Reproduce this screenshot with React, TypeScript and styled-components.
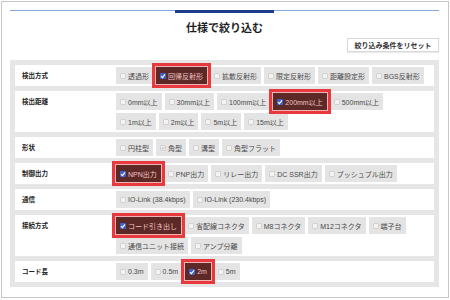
import styled, { createGlobalStyle } from 'styled-components';

type Option = { text: string; checked?: boolean; muted?: boolean };
type FilterRow = { label: string; lines: Option[][] };

const filters: FilterRow[] = [
  {
    label: '検出方式',
    lines: [
      [
        { text: '透過形' },
        { text: '回帰反射形', checked: true },
        { text: '拡散反射形' },
        { text: '限定反射形' },
        { text: '距離設定形' },
        { text: 'BGS反射形' },
      ],
    ],
  },
  {
    label: '検出距離',
    lines: [
      [
        { text: '0mm以上' },
        { text: '30mm以上' },
        { text: '100mm以上' },
        { text: '200mm以上', checked: true },
        { text: '500mm以上' },
      ],
      [{ text: '1m以上' }, { text: '2m以上' }, { text: '5m以上' }, { text: '15m以上' }],
    ],
  },
  {
    label: '形状',
    lines: [
      [
        { text: '円柱型' },
        { text: '角型', muted: true },
        { text: '溝型' },
        { text: '角型フラット' },
      ],
    ],
  },
  {
    label: '制御出力',
    lines: [
      [
        { text: 'NPN出力', checked: true },
        { text: 'PNP出力' },
        { text: 'リレー出力' },
        { text: 'DC SSR出力' },
        { text: 'プッシュプル出力' },
      ],
    ],
  },
  {
    label: '通信',
    lines: [[{ text: 'IO-Link (38.4kbps)' }, { text: 'IO-Link (230.4kbps)' }]],
  },
  {
    label: '接続方式',
    lines: [
      [
        { text: 'コード引き出し', checked: true },
        { text: '省配線コネクタ' },
        { text: 'M8コネクタ' },
        { text: 'M12コネクタ' },
        { text: '端子台' },
      ],
      [{ text: '通信ユニット接続' }, { text: 'アンプ分離' }],
    ],
  },
  {
    label: 'コード長',
    lines: [
      [
        { text: '0.3m' },
        { text: '0.5m' },
        { text: '2m', checked: true },
        { text: '5m' },
      ],
    ],
  },
];

const CheckBox = ({ checked, muted }: { checked?: boolean; muted?: boolean }) => (
  <S.Box $checked={checked} $muted={muted}>
    {(checked || muted) && (
      <svg width="6" height="6" viewBox="0 0 6 6">
        <polyline
          points="1,3.2 2.4,4.6 5,1.4"
          fill="none"
          stroke={checked ? '#fff' : '#a8a8a8'}
          strokeWidth="1.1"
        />
      </svg>
    )}
  </S.Box>
);

const App = () => {
  return (
    <>
      <GlobalStyle />
      <S.Frame>
        <S.TabLine>
          <S.TabMark />
        </S.TabLine>
        <S.Title>仕様で絞り込む</S.Title>
        <S.Toolbar>
          <S.ResetButton>絞り込み条件をリセット</S.ResetButton>
        </S.Toolbar>
        <S.Panel>
          {filters.map((row) => (
            <S.Row key={row.label}>
              <S.Label>{row.label}</S.Label>
              <S.Options>
                {row.lines.map((line, i) => (
                  <S.Line key={i}>
                    {line.map((opt) => (
                      <S.Chip key={opt.text} $active={opt.checked}>
                        <CheckBox checked={opt.checked} muted={opt.muted} />
                        {opt.text}
                      </S.Chip>
                    ))}
                  </S.Line>
                ))}
              </S.Options>
            </S.Row>
          ))}
        </S.Panel>
      </S.Frame>
    </>
  );
};

const GlobalStyle = createGlobalStyle`
  html, body {
    margin: 0;
    padding: 0;
    background: #ffffff;
  }
  * {
    box-sizing: border-box;
  }
`;

interface ChipProps {
  $active?: boolean;
}
interface BoxProps {
  $checked?: boolean;
  $muted?: boolean;
}

const S = {
  Frame: styled.div`
    margin: 1px;
    width: 448px;
    height: 297px;
    border: 1px solid #c6c6c6;
    padding: 8px 9px 0 8px;
    display: flex;
    flex-direction: column;
    font-family: 'Liberation Sans', 'Noto Sans CJK JP', sans-serif;
    color: #222;
  `,
  TabLine: styled.div`
    height: 3px;
    display: flex;
    justify-content: center;
    background: linear-gradient(#86a9da, #86a9da) top / 100% 1px no-repeat;
  `,
  TabMark: styled.div`
    width: 99px;
    height: 3px;
    background: #1b3c8c;
  `,
  Title: styled.h1`
    margin: 7px 0 0;
    height: 16px;
    line-height: 16px;
    text-align: center;
    font-size: 11px;
    font-weight: 700;
    color: #1e1e1e;
  `,
  Toolbar: styled.div`
    margin-top: 2px;
    display: flex;
    justify-content: flex-end;
  `,
  ResetButton: styled.button`
    width: 92px;
    height: 14px;
    padding: 0;
    background: #fff;
    border: 1px solid #d8d8d8;
    box-shadow: 0 1px 1px rgba(0, 0, 0, 0.08);
    font-family: inherit;
    font-size: 7px;
    font-weight: 700;
    color: #333;
  `,
  Panel: styled.div`
    margin-top: 8px;
    padding: 5px;
    background: #e6e6e6;
    display: flex;
    flex-direction: column;
    gap: 5px;
  `,
  Row: styled.div`
    display: flex;
    background: #fff;
  `,
  Label: styled.div`
    width: 101px;
    flex-shrink: 0;
    padding-left: 7px;
    line-height: 21px;
    font-size: 6.5px;
    font-weight: 700;
    color: #222;
  `,
  Options: styled.div`
    display: flex;
    flex-direction: column;
    gap: 3px;
    padding: 2px 0;
  `,
  Line: styled.div`
    display: flex;
    gap: 3px;
  `,
  Chip: styled.div<ChipProps>`
    position: relative;
    display: flex;
    align-items: center;
    gap: 2px;
    height: 17px;
    padding: 0 4px;
    white-space: nowrap;
    font-size: 7px;
    background: ${({ $active }) => ($active ? '#5c2927' : '#e4e4e4')};
    color: ${({ $active }) => ($active ? '#f1c4c2' : '#4a4a4a')};
    box-shadow: ${({ $active }) =>
      $active ? '0 0 0 1px #f2b4b2, 0 0 0 4px #e7393e' : 'none'};
    z-index: ${({ $active }) => ($active ? 1 : 0)};
  `,
  Box: styled.span<BoxProps>`
    display: flex;
    align-items: center;
    justify-content: center;
    width: 6px;
    height: 6px;
    border: ${({ $checked }) => ($checked ? 'none' : '1px solid #d2d2d2')};
    background: ${({ $checked, $muted }) =>
      $checked ? '#3a63cf' : $muted ? '#ececec' : '#f3f3f3'};
    border-radius: 1px;
  `,
};

export default App;
